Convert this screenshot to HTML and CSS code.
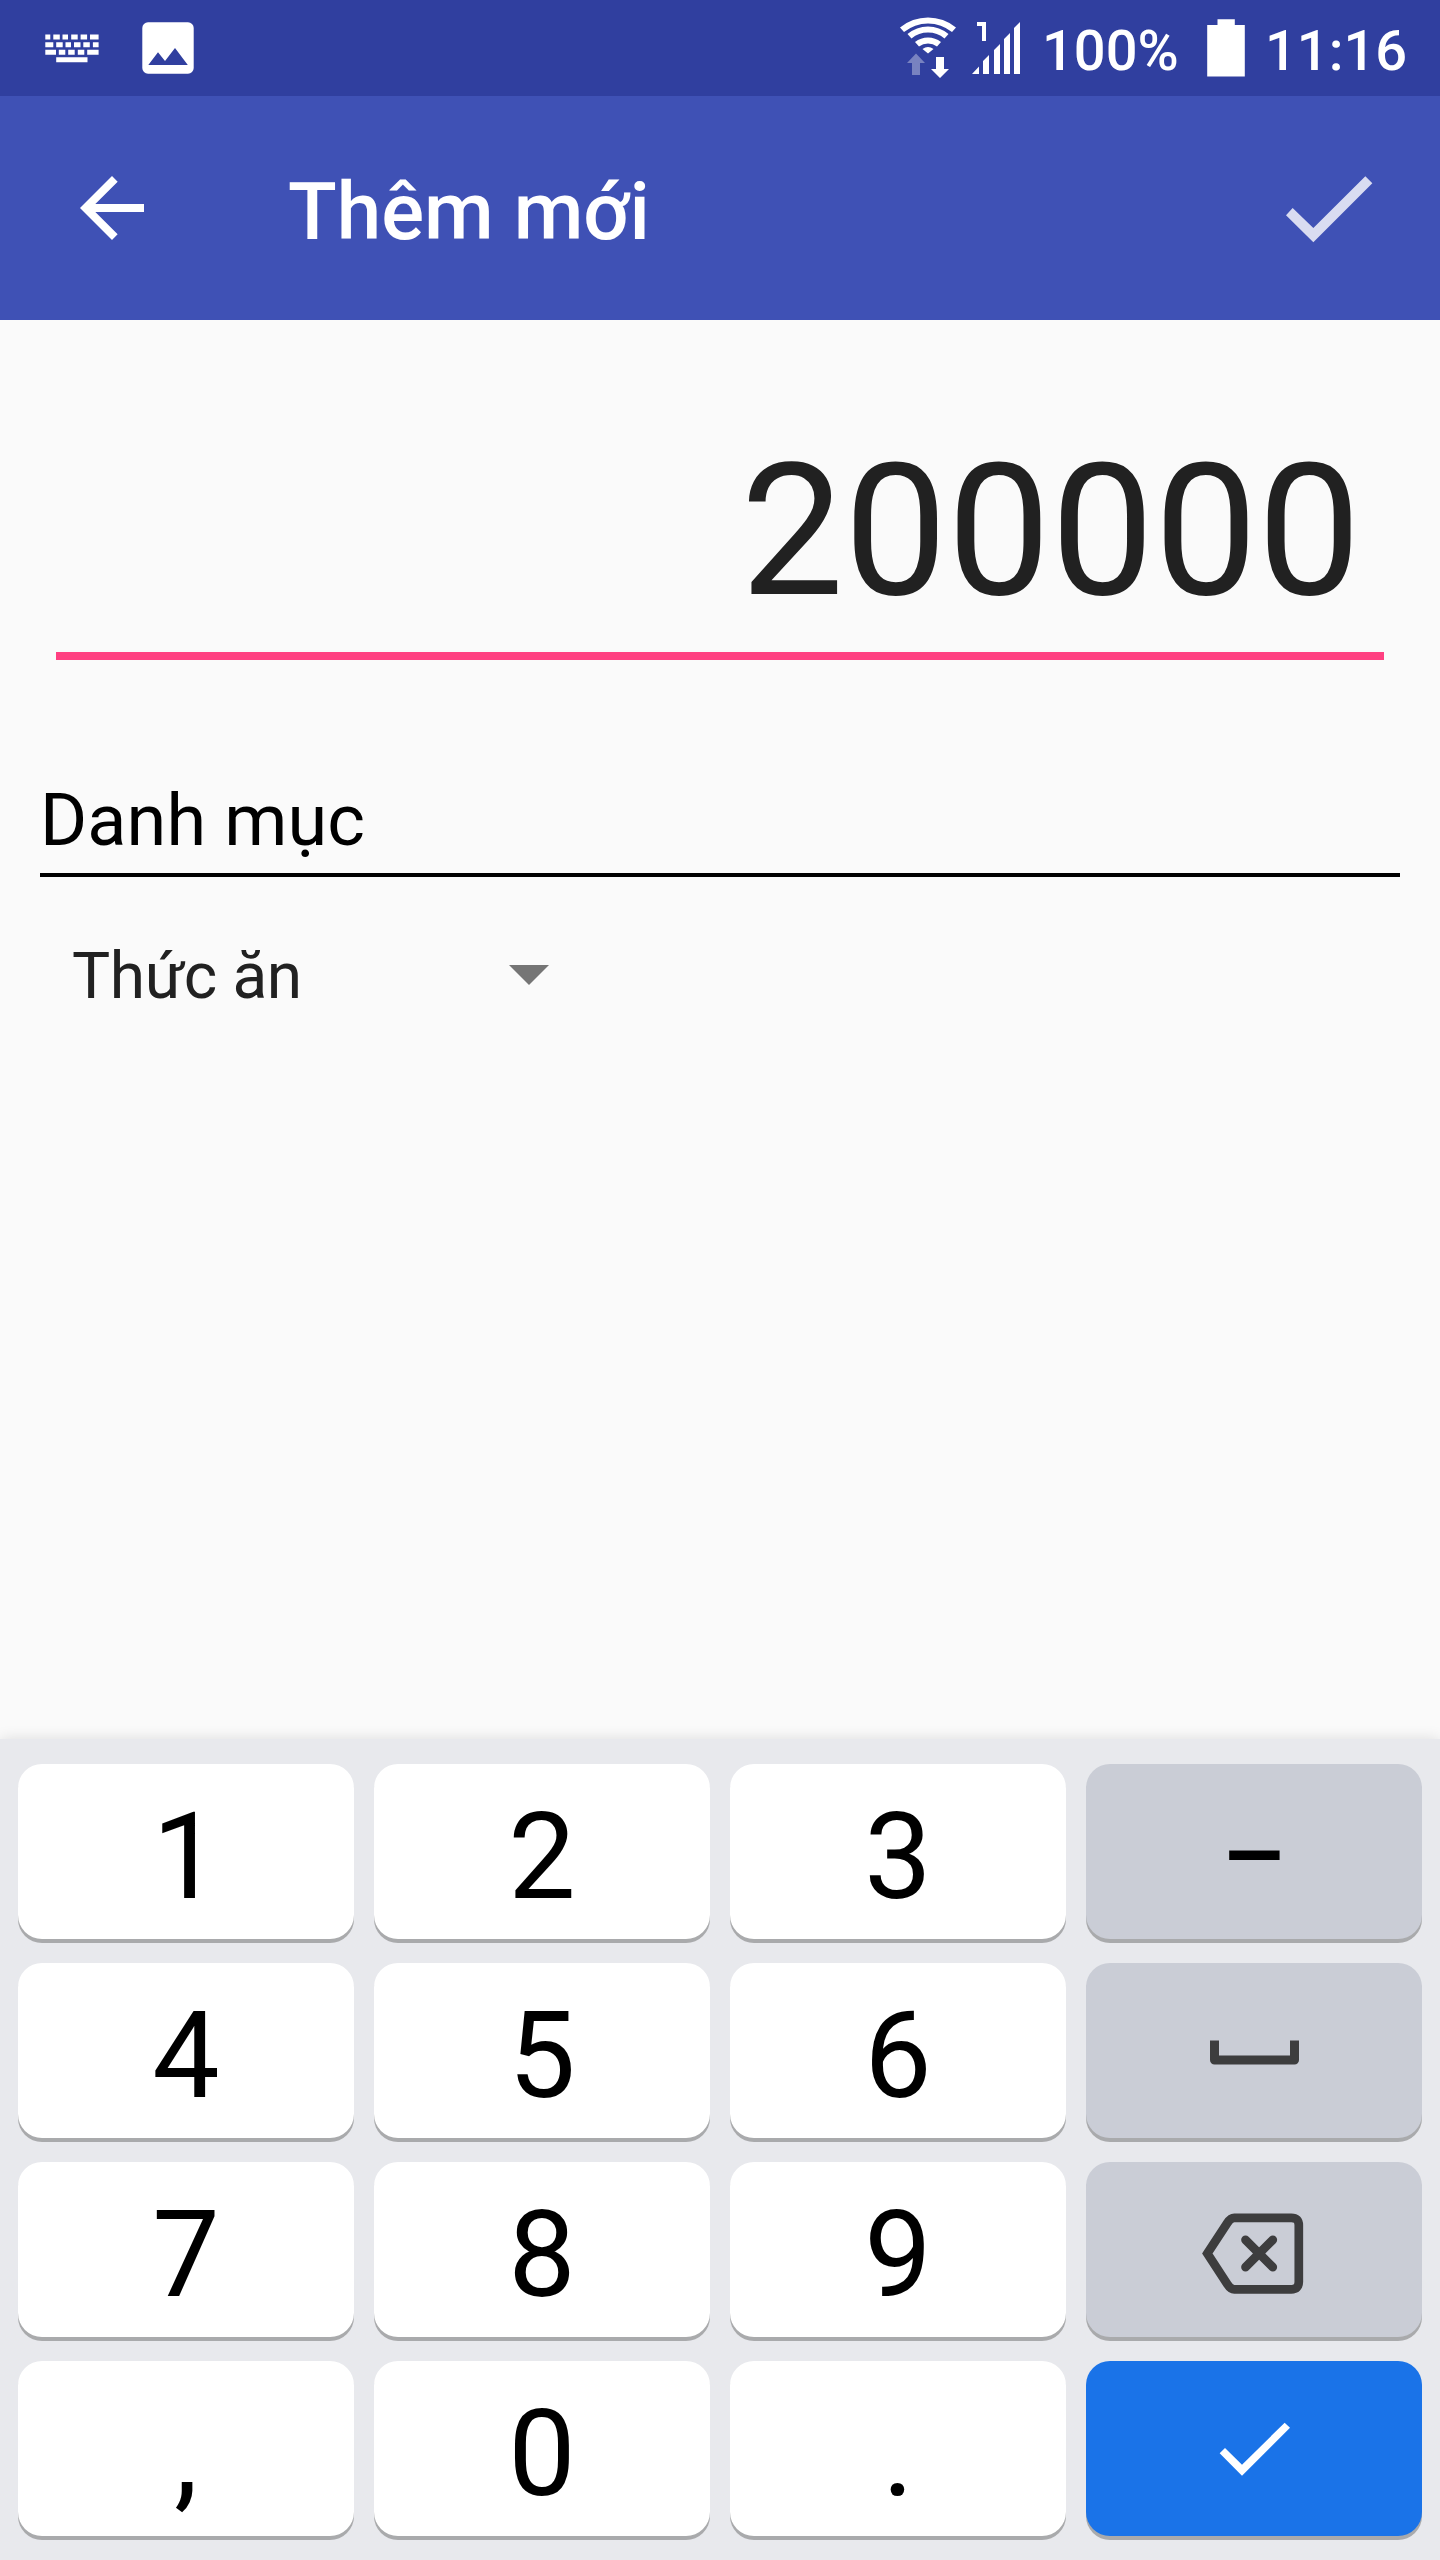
FILE: index.html
```html
<!DOCTYPE html>
<html lang="vi">
<head>
<meta charset="utf-8">
<title>Thêm mới</title>
<link rel="stylesheet" href="styles.css">
</head>
<body>
<div class="screen">
  <header class="status-bar">
    <svg class="status-left" width="160" height="96" viewBox="40 0 160 96" fill="#fff">
      <path d="M45.300 34.500h5v5h-5zM53.300 34.500h6.500v5h-6.500zM62.500 34.500h5.500v5h-5.500zM71.200 34.500h6.500v5h-6.500zM80.600 34.500h6.500v5h-6.500zM90 34.500h8.600v5h-8.600zM45.300 42.200h8v5h-8zM56.200 42.200h6.500v5h-6.500zM65.500 42.200h5.500v5h-5.500zM74 42.200h6.500v5h-6.500zM83.300 42.200h6.500v5h-6.500zM92.900 42.200h5.700v5h-5.700zM45.300 49.800h10.700v5h-10.700zM58.800 49.800h6.500v5h-6.500zM68.200 49.800h6.500v5h-6.500zM77.800 49.800h6.500v5h-6.500zM87.200 49.800h11.400v5h-11.400zM56.200 57.300h31.300v5h-31.300z"/>
      <path fill-rule="evenodd" d="M148 22.300h40a5.700 5.700 0 0 1 5.700 5.700v40a5.700 5.700 0 0 1-5.700 5.700h-40a5.700 5.700 0 0 1-5.700-5.700V28a5.700 5.700 0 0 1 5.700-5.700zM148.300 65h39.500L175 48l-10 13-7-8.700z"/>
    </svg>
    <div class="status-right">
      <svg class="signals" width="124" height="96" viewBox="898 0 124 96" fill="#fff">
        <path d="M900 27.500a44 44 0 0 1 56 0l-4 4.500a38 38 0 0 0-48 0zM907.500 34a32 32 0 0 1 41 0l-4 4.500a26 26 0 0 0-33 0zM915 42a21 21 0 0 1 26 0l-4 4.500a15 15 0 0 0-18 0zM922.500 49a9 9 0 0 1 11 0l-5.500 4.500z"/>
        <path opacity=".35" d="M916 53.500l9 9.500h-5v12h-8V63h-5z"/>
        <path d="M936 57h8v12h5l-9 9-9-9h5z"/>
        <path d="M977 22h9v19h-4V26h-5zM972 74l7-7.500V74zM983 74V61l6-6v19zM994 74V50l6-6v30zM1004 74V39l6-6v41zM1014 74V28l6-6v52z"/>
      </svg>
      <span class="battery-level">100%</span>
      <svg class="battery" width="38" height="96" viewBox="1207 0 38 96" fill="#fff"><path d="M1217.500 19.300h17.300V25h10v51.500h-37.600V25h10.300z"/></svg>
      <span class="clock">11:16</span>
    </div>
  </header>
  <nav class="app-bar">
    <svg width="96" height="96" viewBox="0 0 24 24" fill="#fff"><path d="M20 11H7.830l5.590-5.590L12 4l-8 8 8 8 1.410-1.410L7.830 13H20z"/></svg>
    <h1 class="title">Thêm mới</h1>
    <svg class="save" width="240" height="224" viewBox="0 18 720 672" fill="#d9dcf1"><path d="M258 376l20-22 62 60 156-155 21 21-177 177z"/></svg>
  </nav>
  <main class="content">
    <div class="amount">200000</div>
    <div class="label">Danh mục</div>
    <div class="spinner">
      <span class="spinner-value">Thức ăn</span>
      <svg width="40" height="20" viewBox="0 0 40 20" fill="#757575"><path d="M0 0h40L20 20z"/></svg>
    </div>
  </main>
  <section class="keyboard">
    <div class="key">1</div><div class="key">2</div><div class="key">3</div><div class="key alt dash">–</div>
    <div class="key">4</div><div class="key">5</div><div class="key">6</div>
    <div class="key alt"><svg width="336" height="175" viewBox="1086 1963 336 175" fill="none" stroke="#3d3d3e"><path stroke-width="9" stroke-linejoin="round" d="M1214.500 2040.500v19.500h80v-19.500"/></svg></div>
    <div class="key">7</div><div class="key">8</div><div class="key">9</div>
    <div class="key alt"><svg width="336" height="175" viewBox="1086 2162 336 175" fill="none" stroke="#3d3d3e" stroke-width="8.700"><path d="M1207.300 2253.500l20-30.500q3.300-5.200 7-5.200h57q7.500 0 7.500 7.500v56.500q0 7.500-7.500 7.500h-57q-3.700 0-7-5.200z"/><path stroke-linecap="round" d="M1245.500 2239.800l27.300 27.300M1272.800 2239.800l-27.300 27.300"/></svg></div>
    <div class="key">,</div><div class="key">0</div><div class="key">.</div>
    <div class="key enter"><svg width="336" height="175" viewBox="138 693 1008 525" fill="#fff"><path d="M539 970l16-16 51 50 128-126 16 15-144 144z"/></svg></div>
  </section>
</div>
</body>
</html>
```
FILE: styles.css
```css
* { box-sizing: border-box; }
body { margin: 0; background: #fafafa; font-family: Roboto, sans-serif; }
svg { display: block; flex: none; }
.screen { width: 1440px; height: 2560px; display: flex; flex-direction: column; overflow: hidden; }
.status-bar { height: 96px; background: #303f9f; color: #fff; display: flex; justify-content: space-between; padding: 0 31px 0 40px; font-size: 56px; font-weight: 500; line-height: 102px; }
.status-right { display: flex; }
.battery-level { width: 141px; margin-left: 20px; white-space: nowrap; }
.battery { margin-left: 24px; }
.clock { width: 144px; margin-left: 20px; white-space: nowrap; }
.app-bar { height: 224px; background: #3f51b5; display: flex; align-items: center; padding-left: 64px; }
.title { margin: 0 0 0 128px; color: #fff; font-size: 80px; font-weight: 500; line-height: 94px; padding-top: 8px; }
.save { margin-left: auto; }
.content { flex: 1; display: flex; flex-direction: column; }
.amount { height: 340px; margin: 0 56px; padding: 103px 23px 0 0; border-bottom: 8px solid #ff4081; color: #212121; font-size: 184px; line-height: 216px; text-align: right; }
.label { height: 98px; margin: 119px 40px 0; border-bottom: 4px solid #000; color: #000; font-size: 72px; line-height: 84px; letter-spacing: .1px; }
.spinner { height: 196px; padding-left: 72px; display: flex; align-items: center; width: 549px; justify-content: space-between; color: #212121; font-size: 64px; line-height: 76px; }
.spinner-value { padding-top: 3px; letter-spacing: -.4px; }
.keyboard { height: 821px; background: #e8e9ed; box-shadow: 0 0 14px rgba(0, 0, 0, .12); padding: 25px 18px 0; display: grid; grid-template-columns: repeat(4, 336px); grid-auto-rows: 175px; gap: 24px 20px; }
.key { background: #fff; border-radius: 24px; box-shadow: 0 4px 0 #a9aaac; color: #000; font-size: 120px; line-height: 186px; text-align: center; }
.alt { background: #cacdd6; }
.dash { font-size: 101px; font-weight: 500; line-height: 185px; }
.enter { background: #1a73e8; }
```
